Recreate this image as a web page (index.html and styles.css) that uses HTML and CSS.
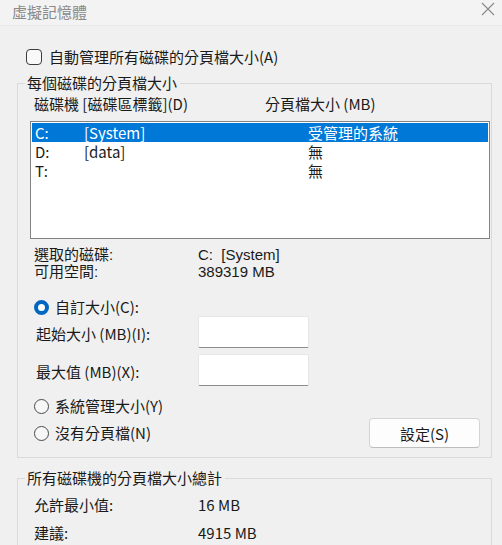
FILE: index.html
```html
<!DOCTYPE html>
<html lang="zh-Hant">
<head>
  <meta charset="UTF-8" />
  <title>虛擬記憶體</title>
  <link rel="stylesheet" href="styles.css">
</head>
<body>
  <div class="window">
    <!-- title bar -->
    <div class="titlebar">
      <span class="title">虛擬記憶體</span>
      <svg class="close" width="14" height="14" viewBox="0 0 14 14">
        <path d="M1 1 L13 13 M13 1 L1 13" stroke="#8a8a8a" stroke-width="1.1" fill="none"/>
      </svg>
    </div>

    <label class="check-row">
      <span class="checkbox"></span>
      <span>自動管理所有磁碟的分頁檔大小(A)</span>
    </label>

    <fieldset class="group">
      <legend>每個磁碟的分頁檔大小</legend>

      <div class="list-head">
        <span class="col-drive">磁碟機 [磁碟區標籤](D)</span>
        <span>分頁檔大小 (MB)</span>
      </div>

      <div class="listbox">
        <div class="list-row selected">
          <span class="c1">C:</span><span class="c2">[System]</span><span>受管理的系統</span>
        </div>
        <div class="list-row">
          <span class="c1">D:</span><span class="c2">[data]</span><span>無</span>
        </div>
        <div class="list-row">
          <span class="c1">T:</span><span class="c2"></span><span>無</span>
        </div>
      </div>

      <div class="info">
        <div class="info-row"><span class="info-label">選取的磁碟:</span><span>C:&nbsp;&nbsp;[System]</span></div>
        <div class="info-row"><span class="info-label">可用空間:</span><span>389319 MB</span></div>
      </div>

      <div class="radio-row first">
        <span class="radio on"></span><span>自訂大小(C):</span>
      </div>

      <div class="field-row">
        <span class="field-label">起始大小 (MB)(I):</span>
        <span class="textbox"></span>
      </div>
      <div class="field-row second">
        <span class="field-label">最大值 (MB)(X):</span>
        <span class="textbox"></span>
      </div>

      <div class="radio-row sys">
        <span class="radio"></span><span>系統管理大小(Y)</span>
      </div>

      <div class="radio-row last">
        <span class="radio"></span><span>沒有分頁檔(N)</span>
        <button class="btn">設定(S)</button>
      </div>
    </fieldset>

    <fieldset class="group total">
      <legend>所有磁碟機的分頁檔大小總計</legend>
      <div class="total-row"><span class="info-label">允許最小值:</span><span>16 MB</span></div>
      <div class="total-row"><span class="info-label">建議:</span><span>4915 MB</span></div>
    </fieldset>
  </div>
</body>
</html>
```

FILE: styles.css
```css
* {
  box-sizing: border-box;
}

html, body {
  margin: 0;
  padding: 0;
  height: 100%;
  overflow: hidden;
}

body {
  font-family: "Noto Sans CJK TC", "Noto Sans", sans-serif;
  font-size: 15px;
  color: #1a1a1a;
  background: #f0f0f0;
}

.window {
  width: 502px;
  height: 545px;
  background: #f0f0f0;
}

.titlebar {
  height: 26px;
  background: #f3f3f3;
  border-bottom: 1px solid #e9e9e9;
  display: flex;
  align-items: center;
  justify-content: space-between;
  padding: 0 7px 2px 12px;
}

.title {
  color: #8a8a8a;
  font-size: 15px;
  line-height: 20px;
}

.close {
  margin-top: -6px;
}

.check-row {
  display: flex;
  align-items: center;
  gap: 7px;
  margin: 21px 0 0 26px;
  height: 20px;
  line-height: 20px;
}

.checkbox {
  width: 16px;
  height: 16px;
  border: 1px solid #3c3c3c;
  border-radius: 4px;
  background: #f9f9f9;
}

.group {
  margin: 6px 10px 0 17px;
  padding: 0 0 9px 0;
  border: 1px solid #dadada;
  min-width: 0;
}

.group legend {
  margin-left: 7px;
  padding: 0 3px 0 2px;
  line-height: 20px;
  height: 20px;
}

.list-head {
  display: flex;
  padding-left: 16px;
  line-height: 20px;
  margin-top: 1px;
}

.col-drive {
  width: 231px;
}

.listbox {
  margin: 7px 1px 0 12px;
  height: 118px;
  background: #fff;
  border: 1px solid #838383;
  padding: 1px;
}

.list-row {
  display: flex;
  height: 19px;
  line-height: 19px;
  padding-left: 3px;
}

.list-row.selected {
  background: #0078d7;
  color: #fff;
}

.c1 {
  width: 49px;
}

.c2 {
  width: 224px;
}

/* tight two-line block: a primary font with a small content area keeps the lines apart */
.info {
  margin-top: 7px;
  padding-left: 16px;
  font-family: "Liberation Sans", "Noto Sans CJK TC", sans-serif;
}

.info-row {
  display: flex;
  line-height: 17px;
}

.info-label {
  width: 164px;
}

.radio-row {
  display: flex;
  align-items: center;
  gap: 6px;
  padding-left: 16px;
  height: 20px;
  line-height: 20px;
}

.radio-row.first {
  margin-top: 17px;
}

.radio-row.sys {
  margin-top: 10px;
}

.radio-row.last {
  margin-top: 2px;
  height: 30px;
  padding-right: 11px;
}

.radio {
  width: 15px;
  height: 15px;
  border-radius: 50%;
  border: 1px solid #4a4a4a;
  background: #f7f7f7;
}

.radio.on {
  border: 4px solid #0067c0;
  background: #fff;
}

.field-row {
  display: flex;
  align-items: center;
  padding-left: 18px;
  height: 32px;
  margin-top: -1px;
}

.field-row.second {
  margin-top: 6px;
}

.field-label {
  width: 162px;
  padding-top: 2px;
}

.textbox {
  width: 111px;
  height: 32px;
  background: #fff;
  border: 1px solid #e6e6e6;
  border-bottom: 1px solid #8c8c8c;
  border-radius: 2px;
}

.btn {
  margin-left: auto;
  width: 111px;
  height: 30px;
  font-family: inherit;
  font-size: 15px;
  color: #1a1a1a;
  background: #fdfdfd;
  border: 1px solid #d4d4d4;
  border-bottom-color: #bdbdbd;
  border-radius: 4px;
  padding: 0;
}

.group.total {
  margin-top: 10px;
  height: 100px;
}

.total-row {
  display: flex;
  padding-left: 16px;
  line-height: 20px;
  margin-top: 7px;
}

.total-row + .total-row {
  margin-top: 8px;
}
```
